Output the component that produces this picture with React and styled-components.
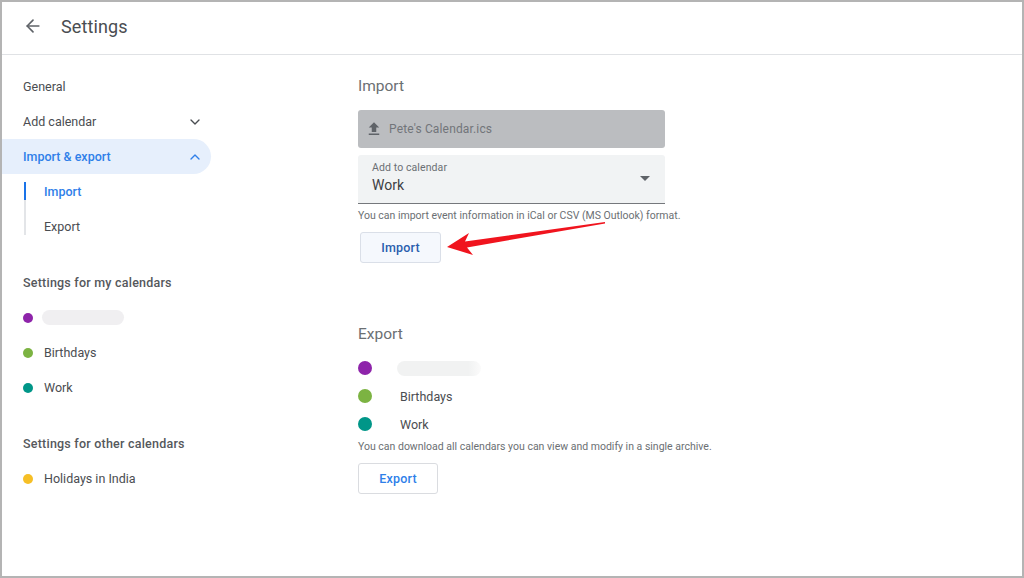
import React from "react";
import styled, {createGlobalStyle} from "styled-components";
import {ArrowLeft, ChevronDown, ChevronUp} from "lucide-react";

const GlobalStyle = createGlobalStyle`
  html, body {
    margin: 0;
    padding: 0;
    background: #fff;
  }
  * {
    box-sizing: border-box;
  }
`;

const Frame = styled.div`
  position: relative;
  width: 1024px;
  height: 578px;
  border: 2px solid #b4b4b4;
  background: #fff;
  font-family: Roboto, "Liberation Sans", sans-serif;
  color: #4a4d51;
  overflow: hidden;
`;

const Header = styled.header`
  display: flex;
  align-items: center;
  height: 53px;
  padding: 0 0 4px 21px;
  border-bottom: 1px solid #e0e2e5;
`;

const BackIcon = styled(ArrowLeft)`
  width: 20px;
  height: 20px;
  color: #5f6368;
  stroke-width: 2;
`;

const Title = styled.h1`
  margin: 0 0 0 18px;
  font-size: 18px;
  font-weight: 400;
  letter-spacing: 0.1px;
`;

const Body = styled.div`
  display: flex;
`;

const Sidebar = styled.nav`
  width: 356px;
  padding-top: 14px;
  flex-shrink: 0;
`;

const NavRow = styled.div`
  display: flex;
  align-items: center;
  justify-content: space-between;
  width: 209px;
  height: 35px;
  padding: 0 8px 0 21px;
  border-radius: 0 18px 18px 0;
  font-size: 12.5px;
  background: ${props => props.active ? "#e6effc" : "transparent"};
  color: ${props => props.active ? "#2f7fe9" : "#4a4d51"};
  font-weight: ${props => props.active ? 500 : 400};

  svg {
    width: 16px;
    height: 16px;
    stroke-width: 2;
  }
`;

const SubNav = styled.div`
  display: flex;
  flex-direction: column;
  gap: 17px;
  margin: 8px 0 30px 22px;
  border-left: 2px solid #e3e5e8;
`;

const SubRow = styled.div`
  display: flex;
  align-items: center;
  height: 18px;
  margin-left: -2px;
  padding-left: 18px;
  border-left: 2px solid ${props => props.active ? "#1a73e8" : "transparent"};
  font-size: 12.5px;
  color: ${props => props.active ? "#2f7fe9" : "#4a4d51"};
  font-weight: ${props => props.active ? 500 : 400};
`;

const SectionLabel = styled.div`
  display: flex;
  align-items: center;
  height: 35px;
  padding-left: 21px;
  font-size: 12.5px;
  font-weight: 500;
  letter-spacing: 0.22px;
  color: #55585c;
`;

const CalendarList = styled.div`
  margin-bottom: 21px;
`;

const CalendarRow = styled.div`
  display: flex;
  align-items: center;
  height: 35px;
  padding-left: 21px;
  font-size: 12.5px;
`;

const Dot = styled.span`
  flex-shrink: 0;
  width: ${props => props.size || 10}px;
  height: ${props => props.size || 10}px;
  border-radius: 50%;
  background: ${props => props.color};
`;

const SideName = styled.span`
  margin-left: 11px;
`;

const Redacted = styled.span`
  display: block;
  width: ${props => props.width}px;
  height: 15px;
  margin-left: ${props => props.offset}px;
  border-radius: 8px;
  background: ${props => props.tone};
`;

const Main = styled.main`
  width: 400px;
  padding-top: 21px;
`;

const Heading = styled.h2`
  margin: 0;
  height: 20px;
  line-height: 20px;
  font-size: 15.5px;
  font-weight: 400;
  color: #6b6f73;
`;

const UploadBox = styled.div`
  display: flex;
  align-items: center;
  width: 307px;
  height: 38px;
  margin-top: 14px;
  padding-left: 7px;
  border-radius: 3px;
  background: #bbbdc0;
  font-size: 12px;
  letter-spacing: 0.15px;
  color: #72757a;

  svg {
    width: 18px;
    height: 18px;
    margin-right: 6px;
  }
`;

const SelectBox = styled.div`
  display: flex;
  align-items: center;
  justify-content: space-between;
  width: 307px;
  height: 49px;
  margin-top: 7px;
  padding: 0 15px 2px 14px;
  border-radius: 3px 3px 0 0;
  border-bottom: 1px solid #75787c;
  background: #f1f3f4;
`;

const SelectLabel = styled.div`
  font-size: 10.5px;
  line-height: 13px;
  letter-spacing: 0.1px;
  color: #6b6f73;
`;

const SelectValue = styled.div`
  margin-top: 2px;
  font-size: 14px;
  line-height: 19px;
  color: #3c4043;
`;

const Caret = styled.span`
  width: 0;
  height: 0;
  border-left: 5px solid transparent;
  border-right: 5px solid transparent;
  border-top: 5px solid #5f6368;
`;

const Help = styled.p`
  margin: ${props => props.tight ? "2px" : "5px"} 0 0;
  height: 14px;
  line-height: 14px;
  width: 420px;
  font-size: 10.5px;
  color: #6b6f73;
`;

const ActionButton = styled.button`
  display: block;
  width: ${props => props.width}px;
  height: 31px;
  margin: ${props => props.margin};
  padding: 0;
  border: 1px solid ${props => props.tinted ? "#dadfe8" : "#dadce0"};
  border-radius: 3px;
  background: ${props => props.tinted ? "#f5f8fd" : "#fff"};
  color: ${props => props.tinted ? "#2a5eae" : "#2f7fe9"};
  font-family: inherit;
  font-size: 12.5px;
  font-weight: 500;
  letter-spacing: 0.2px;
`;

const ExportSection = styled.section`
  margin-top: 61px;
`;

const ExportList = styled.div`
  margin-top: 10px;
`;

const ExportRow = styled.div`
  display: flex;
  align-items: center;
  height: 28px;
  font-size: 12.5px;
`;

const ExportName = styled.span`
  margin-left: 28px;
`;

const ArrowOverlay = styled.svg`
  position: absolute;
  left: 438px;
  top: 212px;
  width: 176px;
  height: 50px;
`;

function App() {
  return (
    <Frame>
      <GlobalStyle/>
      <Header>
        <BackIcon/>
        <Title>Settings</Title>
      </Header>
      <Body>
        <Sidebar>
          <NavRow>General</NavRow>
          <NavRow>Add calendar<ChevronDown/></NavRow>
          <NavRow active>Import &amp; export<ChevronUp/></NavRow>
          <SubNav>
            <SubRow active>Import</SubRow>
            <SubRow>Export</SubRow>
          </SubNav>
          <SectionLabel>Settings for my calendars</SectionLabel>
          <CalendarList>
            <CalendarRow>
              <Dot color="#8e24aa"/>
              <Redacted width={82} offset={9} tone="#f0eff1"/>
            </CalendarRow>
            <CalendarRow>
              <Dot color="#7cb342"/>
              <SideName>Birthdays</SideName>
            </CalendarRow>
            <CalendarRow>
              <Dot color="#009688"/>
              <SideName>Work</SideName>
            </CalendarRow>
          </CalendarList>
          <SectionLabel>Settings for other calendars</SectionLabel>
          <CalendarRow>
            <Dot color="#f6bf26"/>
            <SideName>Holidays in India</SideName>
          </CalendarRow>
        </Sidebar>
        <Main>
          <section>
            <Heading>Import</Heading>
            <UploadBox>
              <svg viewBox="0 0 24 24" fill="#5f6368">
                <path d="M5 20h14v-2H5v2zm0-10h4v6h6v-6h4l-7-7-7 7z"/>
              </svg>
              Pete's Calendar.ics
            </UploadBox>
            <SelectBox>
              <div>
                <SelectLabel>Add to calendar</SelectLabel>
                <SelectValue>Work</SelectValue>
              </div>
              <Caret/>
            </SelectBox>
            <Help>You can import event information in iCal or CSV (MS Outlook) format.</Help>
            <ActionButton tinted width={81} margin="9px 0 0 2px">Import</ActionButton>
          </section>
          <ExportSection>
            <Heading>Export</Heading>
            <ExportList>
              <ExportRow>
                <Dot color="#8e24aa" size={14}/>
                <Redacted width={84} offset={25} tone="linear-gradient(90deg, #f1f2f2 85%, #fbfbfb)"/>
              </ExportRow>
              <ExportRow>
                <Dot color="#7cb342" size={14}/>
                <ExportName>Birthdays</ExportName>
              </ExportRow>
              <ExportRow>
                <Dot color="#009688" size={14}/>
                <ExportName>Work</ExportName>
              </ExportRow>
            </ExportList>
            <Help tight>You can download all calendars you can view and modify in a single archive.</Help>
            <ActionButton width={80} margin="9px 0 0">Export</ActionButton>
          </ExportSection>
        </Main>
      </Body>
      <ArrowOverlay viewBox="0 0 176 50">
        <polygon fill="#f0141e" points="165,8 165,9.5 27,33.5 33,41 7,33 29,19 25,27.5"/>
      </ArrowOverlay>
    </Frame>
  );
}

export default App;
